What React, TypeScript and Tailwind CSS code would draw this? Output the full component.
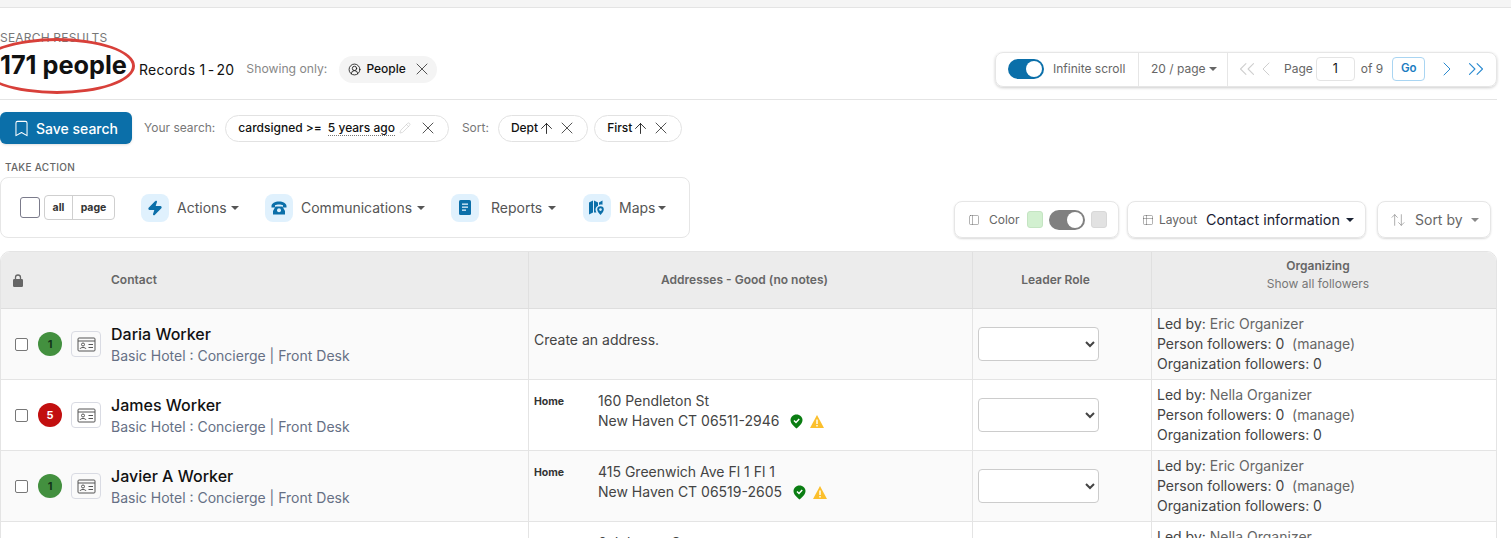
import { ChevronLeft, ChevronRight, ChevronsLeft, ChevronsRight, ArrowUp, ArrowUpDown, Bookmark, CircleUserRound, PanelLeft, Pencil, Table2, X, Zap } from "lucide-react";

const Caret = ({ className = "" }: { className?: string }) => (
  <span className={`inline-block w-0 h-0 border-x-[4px] border-x-transparent border-t-[4px] border-t-current ${className}`} />
);

const Chip = ({ children }: { children: React.ReactNode }) => (
  <div className="flex items-center h-[27px] pl-[12px] pr-[10px] rounded-full border border-[#e2e2e2] bg-white text-[12px] font-medium text-[#111]">
    {children}
  </div>
);

const ActionItem = ({ icon, label, gap, width, caretGap }: { icon: React.ReactNode; label: string; gap: string; width: string; caretGap: string }) => (
  <div className={`flex items-center ${width} text-[14px] text-[#555]`}>
    <div className="w-[28px] h-[28px] rounded-lg bg-[#e0f1fd] text-[#0b6fa9] flex items-center justify-center shrink-0">{icon}</div>
    <span className={`whitespace-nowrap ${gap}`}>{label}</span>
    <Caret className={`${caretGap} text-[#555]`} />
  </div>
);

const PhoneIcon = () => (
  <svg width="16" height="14" viewBox="0 0 16 14" fill="currentColor">
    <path d="M.5 5C.5 2.500 4 .5 8 .5s7.500 2 7.500 4.500v1.500h-3.500V4.300C11 3.700 9.500 3.400 8 3.400s-3 .3-4 .9v2.200H.5z" />
    <path d="M4.500 5.500h7l2.500 4.500v3.500H2V10z" />
    <circle cx="8" cy="9.300" r="2" fill="#e0f1fd" />
  </svg>
);

const ReportIcon = () => (
  <svg width="12" height="15" viewBox="0 0 12 15">
    <rect x="0" y="0" width="12" height="15" rx="1.500" fill="currentColor" />
    <rect x="3" y="3.500" width="6" height="1.300" fill="#e0f1fd" />
    <rect x="3" y="6.500" width="6" height="1.300" fill="#e0f1fd" />
    <rect x="3" y="9.500" width="4" height="1.300" fill="#e0f1fd" />
  </svg>
);

const MapIcon = () => (
  <svg width="16" height="16" viewBox="0 0 16 16" fill="currentColor">
    <path d="M0 2.500l4-2v12l-4 2zM5 .5l4 2v3.200c-1.600.7-2.500 2.200-2.500 3.800 0 1 .4 2 .9 3L5 12.500zM10 2.500l3.500-2v4.300c-1-.3-2.500-.3-3.500.2z" />
    <path d="M11.500 6.300a3.300 3.300 0 0 0-3.300 3.300c0 2 2 3.900 3.300 5.400 1.300-1.500 3.300-3.400 3.300-5.400a3.300 3.300 0 0 0-3.300-3.300z" />
    <circle cx="11.500" cy="9.600" r="1.300" fill="#e0f1fd" />
  </svg>
);

const LockIcon = () => (
  <svg width="10" height="13" viewBox="0 0 10 13" fill="#666">
    <path d="M2.500 5.500V3.500a2.500 2.500 0 0 1 5 0v2" fill="none" stroke="#666" strokeWidth="1.300" />
    <rect x="0" y="5" width="10" height="8" rx="1.200" />
  </svg>
);

const IdCard = () => (
  <div className="w-[30px] h-[26px] rounded border border-[#d9dbe3] flex items-center justify-center shrink-0">
    <svg width="19" height="15" viewBox="0 0 19 15" fill="none" stroke="#555" strokeWidth="1">
      <rect x="1" y="1" width="17" height="13" rx="1" />
      <line x1="1" y1="4" x2="18" y2="4" />
      <circle cx="6" cy="7.500" r="1.500" />
      <path d="M3 12c.5-2 5.500-2 6 0" />
      <line x1="11.500" y1="7.500" x2="16" y2="7.500" />
      <line x1="11.500" y1="10.500" x2="16" y2="10.500" />
    </svg>
  </div>
);

const GoodPin = () => (
  <svg width="13" height="15" viewBox="0 0 13 15">
    <path d="M6.500 .5C3 .5.500 3 .500 6c0 3.500 3.500 6.500 6 8.500 2.500-2 6-5 6-8.500 0-3-2.500-5.500-6-5.500z" fill="#0a7d12" />
    <path d="M4 6.500l2 2 3.200-3.500" fill="none" stroke="#fff" strokeWidth="1.500" />
  </svg>
);

const Warn = () => (
  <svg width="14" height="13" viewBox="0 0 14 13">
    <path d="M7 0L14 13H0z" fill="#fbbf2c" />
    <rect x="6.300" y="4.500" width="1.400" height="4.500" fill="#fff" />
    <rect x="6.300" y="10" width="1.400" height="1.500" fill="#fff" />
  </svg>
);

const rows = [
  { name: "Daria Worker", score: "1", scoreBg: "bg-[#43903f]", scoreText: "text-[#12331a]", by: "Eric Organizer", shade: true },
  { name: "James Worker", score: "5", scoreBg: "bg-[#c20f0f]", scoreText: "text-white", by: "Nella Organizer", shade: false, line1: "160 Pendleton St", line2: "New Haven CT 06511-2946" },
  { name: "Javier A Worker", score: "1", scoreBg: "bg-[#43903f]", scoreText: "text-[#12331a]", by: "Eric Organizer", shade: true, line1: "415 Greenwich Ave Fl 1 Fl 1", line2: "New Haven CT 06519-2605" },
];

export default function App() {
  return (
    <div className="w-[1511px] h-[538px] overflow-hidden bg-white text-[#111] font-['Inter','Liberation_Sans',sans-serif]">
      <div className="h-[7px] bg-[#f5f5f5] border-b border-[#e4e4e4] box-content" />

      <div className="h-[92px] border-b border-[#e4e4e4] mr-[14px] flex flex-col">
        <div className="mt-[23px] text-[12px] leading-[13px] tracking-[0.2px] text-[#777]">SEARCH RESULTS</div>
        <div className="flex items-center mt-[1px]">
          <div className="relative mb-[8px] text-[25.300px] leading-[40px] font-bold whitespace-nowrap">
            171 people
            <div className="absolute left-[-21px] top-[-7px] w-[156px] h-[56px] rounded-[50%] border-[3px] border-[#d8403a]" />
          </div>
          <span className="ml-[12px] text-[14px] tracking-[0.3px] whitespace-nowrap">Records 1<span className="mx-[2px]">-</span>20</span>
          <span className="ml-[12px] text-[12.200px] text-[#888] whitespace-nowrap">Showing only:</span>
          <div className="ml-[12px] w-[98px] h-[27px] pl-[9px] rounded-full bg-[#f4f4f4] flex items-center text-[12px] font-medium">
            <CircleUserRound size={13} strokeWidth={1.500} />
            <span className="ml-[5px]">People</span>
            <X size={20} strokeWidth={1.100} className="ml-[6px] text-[#444]" />
          </div>
          <div className="ml-auto h-[35px] w-[502px] rounded-lg border border-[#e6e6e6] shadow-[0_1px_3px_rgba(0,0,0,0.2)] flex items-center text-[12px] text-[#666]">
            <div className="flex items-center h-full w-[143px] border-r border-[#e6e6e6] pl-[12px]">
              <div className="w-[36px] h-[20px] rounded-full bg-[#0b6fa9] relative shrink-0">
                <div className="absolute right-[2px] top-[2px] w-[16px] h-[16px] rounded-full bg-white" />
              </div>
              <span className="ml-[9px] text-[12px] whitespace-nowrap">Infinite scroll</span>
            </div>
            <div className="flex items-center h-full w-[89px] border-r border-[#e6e6e6] pl-[12px] gap-[3px] whitespace-nowrap">
              20 / page <Caret />
            </div>
            <ChevronsLeft size={26} strokeWidth={1} className="ml-[6px] text-[#cfcfcf]" />
            <ChevronLeft size={24} strokeWidth={1} className="ml-[-6px] text-[#cfcfcf]" />
            <span className="ml-[6px]">Page</span>
            <div className="ml-[3px] w-[39px] h-[24px] rounded border border-[#e4e4e4] flex items-center justify-center text-[#111] text-[12.500px]">1</div>
            <span className="ml-[6px] whitespace-nowrap">of 9</span>
            <div className="ml-[9px] w-[33px] h-[24px] rounded border border-[#a9d5f2] flex items-center justify-center text-[#1a7cc1] text-[11.500px] font-semibold">Go</div>
            <ChevronRight size={24} strokeWidth={1} className="ml-[10px] text-[#2a8ad0]" />
            <ChevronsRight size={26} strokeWidth={1} className="ml-[4px] text-[#2a8ad0]" />
          </div>
        </div>
      </div>

      <div className="flex items-center mt-[12px] h-[32px]">
        <div className="w-[132px] h-[32px] rounded-md bg-[#0b6fa9] shadow-sm text-white flex items-center pl-[12px] text-[14px] font-medium">
          <Bookmark size={19} strokeWidth={1.300} />
          <span className="ml-[5px] whitespace-nowrap">Save search</span>
        </div>
        <span className="ml-[12px] text-[12px] text-[#777] whitespace-nowrap">Your search:</span>
        <div className="ml-[10px]">
          <Chip>
            <span className="whitespace-nowrap">cardsigned &gt;=</span>
            <span className="ml-[6px] border-b border-dotted border-[#777] leading-[14px] whitespace-nowrap">5 years ago</span>
            <Pencil size={12} strokeWidth={1} className="ml-[4px] text-[#bbb]" />
            <X size={20} strokeWidth={1.100} className="ml-[7px] text-[#444]" />
          </Chip>
        </div>
        <span className="ml-[13px] text-[12px] text-[#777]">Sort:</span>
        <div className="ml-[9px] flex gap-[6px]">
          <Chip>
            Dept <ArrowUp size={17} strokeWidth={1.200} />
            <X size={20} strokeWidth={1.100} className="ml-[2px] text-[#444]" />
          </Chip>
          <Chip>
            First <ArrowUp size={17} strokeWidth={1.200} />
            <X size={20} strokeWidth={1.100} className="ml-[2px] text-[#444]" />
          </Chip>
        </div>
      </div>

      <div className="mt-[17px] pl-[5px] text-[10px] leading-[12px] font-medium tracking-[0.3px] text-[#666]">TAKE ACTION</div>

      <div className="flex items-end mt-[4px] h-[61px] pr-[20px]">
        <div className="w-[690px] h-[61px] rounded-lg border border-[#e6e6e6] flex items-center pl-[19px]">
          <div className="w-[20px] h-[21px] rounded-[3px] border border-[#7b7b8b]" />
          <div className="ml-[4px] flex w-[71px] h-[25px] rounded border border-[#cfcfcf] text-[10.500px] font-bold text-[#333]">
            <div className="w-[28px] border-r border-[#cfcfcf] flex items-center justify-center">all</div>
            <div className="flex-1 flex items-center justify-center">page</div>
          </div>
          <div className="ml-[26px] flex items-center">
            <ActionItem gap="ml-[8px]" caretGap="ml-[4px]" width="w-[124px]" label="Actions" icon={<Zap size={16} fill="currentColor" />} />
            <ActionItem gap="ml-[8px]" caretGap="ml-[5px]" width="w-[186px]" label="Communications" icon={<PhoneIcon />} />
            <ActionItem gap="ml-[12px]" caretGap="ml-[6px]" width="w-[132px]" label="Reports" icon={<ReportIcon />} />
            <ActionItem gap="ml-[8px]" caretGap="ml-[3px]" width="w-[84px]" label="Maps" icon={<MapIcon />} />
          </div>
        </div>
        <div className="ml-auto flex items-center">
          <div className="w-[165px] h-[37px] rounded-lg border border-[#e6e6e6] shadow-[0_1px_2px_rgba(0,0,0,0.15)] flex items-center pl-[13px] text-[12px] text-[#666]">
            <PanelLeft size={12} strokeWidth={1} />
            <span className="ml-[9px]">Color</span>
            <div className="ml-[7px] w-[16px] h-[17px] rounded-[3px] bg-[#d2f0d0] border border-[#c4e4c2]" />
            <div className="ml-[6px] w-[36px] h-[20px] rounded-full bg-[#808080] relative">
              <div className="absolute right-[2px] top-[2px] w-[16px] h-[16px] rounded-full bg-white" />
            </div>
            <div className="ml-[6px] w-[16px] h-[17px] rounded-[3px] bg-[#e2e2e2] border border-[#d8d8d8]" />
          </div>
          <div className="ml-[8px] w-[239px] h-[37px] rounded-lg border border-[#e6e6e6] shadow-[0_1px_2px_rgba(0,0,0,0.15)] flex items-center pl-[14px] text-[12px] text-[#666]">
            <Table2 size={12} strokeWidth={1} />
            <span className="ml-[5px]">Layout</span>
            <span className="ml-[9px] text-[14.300px] text-[#1a2233] whitespace-nowrap">Contact information</span>
            <Caret className="ml-[6px] text-[#1a2233]" />
          </div>
          <div className="ml-[11px] w-[114px] h-[37px] rounded-lg border border-[#e6e6e6] shadow-[0_1px_2px_rgba(0,0,0,0.15)] flex items-center pl-[12px] text-[14px] text-[#666]">
            <ArrowUpDown size={16} strokeWidth={1} className="text-[#888]" />
            <span className="ml-[9px] whitespace-nowrap">Sort by</span>
            <Caret className="ml-[8px] text-[#888]" />
          </div>
        </div>
      </div>

      <div className="mt-[13px] mr-[14px] border border-[#e4e4e4] rounded-t-[10px] overflow-hidden">
        <div className="grid grid-cols-[528px_444px_179px_1fr] h-[57px] bg-[#ececec] text-[12px] font-semibold text-[#666] border-b border-[#dedede]">
          <div className="flex items-center pl-[12px] border-r border-[#e0e0e0]">
            <LockIcon />
            <span className="ml-[88px]">Contact</span>
          </div>
          <div className="flex items-center justify-center pr-[12px] border-r border-[#e0e0e0]">Addresses - Good (no notes)</div>
          <div className="flex items-center justify-center pr-[13px] border-r border-[#e0e0e0]">Leader Role</div>
          <div className="flex flex-col items-center justify-center pr-[12px] pb-[10px] leading-[18px]">
            <span>Organizing</span>
            <span className="font-normal text-[#777]">Show all followers</span>
          </div>
        </div>
        {rows.map((r) => (
          <div key={r.name} className={`grid grid-cols-[528px_444px_179px_1fr] h-[71px] border-b border-[#e4e4e4] ${r.shade ? "bg-[#fafafa]" : "bg-white"}`}>
            <div className="flex items-center pl-[14px] border-r border-[#e4e4e4]">
              <div className="w-[13px] h-[13px] rounded-[2px] border border-[#777] bg-white shrink-0" />
              <div className={`ml-[10px] w-[24px] h-[24px] rounded-full flex items-center justify-center text-[11px] font-bold shrink-0 ${r.scoreBg} ${r.scoreText}`}>{r.score}</div>
              <div className="ml-[9px]"><IdCard /></div>
              <div className="ml-[10px] flex flex-col pt-[1px]">
                <span className="text-[16px] leading-[22px] font-medium">{r.name}</span>
                <span className="mt-[1px] text-[14px] leading-[20px] text-[#667085]">Basic Hotel : Concierge | Front Desk</span>
              </div>
            </div>
            <div className="border-r border-[#e4e4e4] px-[5px] text-[14px] leading-[20px] text-[#444]">
              {r.line1 ? (
                <div className="flex pt-[11px]">
                  <span className="w-[64px] pt-[1px] text-[10.500px] font-bold text-[#333]">Home</span>
                  <div>
                    <div>{r.line1}</div>
                    <div className="flex items-center">
                      {r.line2}
                      <span className="ml-[11px] flex items-center gap-[7px]"><GoodPin /><Warn /></span>
                    </div>
                  </div>
                </div>
              ) : (
                <div className="pt-[21px]">Create an address.</div>
              )}
            </div>
            <div className="border-r border-[#e4e4e4] pl-[5px] pt-[18px]">
              <select className="w-[121px] h-[34px] rounded border border-[#ccc] bg-white text-[#444]" defaultValue="">
                <option value=""></option>
              </select>
            </div>
            <div className="pl-[5px] pt-[5px] text-[14px] leading-[20px] text-[#444]">
              <div>Led by: <span className="text-[#666]">{r.by}</span></div>
              <div>Person followers: 0&nbsp; <span className="text-[#666]">(manage)</span></div>
              <div>Organization followers: 0</div>
            </div>
          </div>
        ))}
        <div className="grid grid-cols-[528px_444px_179px_1fr] h-[40px]">
          <div className="border-r border-[#e4e4e4]" />
          <div className="border-r border-[#e4e4e4] pl-[69px] pt-[11px] text-[14px] leading-[20px] text-[#444]">6 Johnson St</div>
          <div className="border-r border-[#e4e4e4]" />
          <div className="pl-[5px] pt-[5px] text-[14px] leading-[20px] text-[#444]">Led by: <span className="text-[#666]">Nella Organizer</span></div>
        </div>
      </div>
    </div>
  );
}
